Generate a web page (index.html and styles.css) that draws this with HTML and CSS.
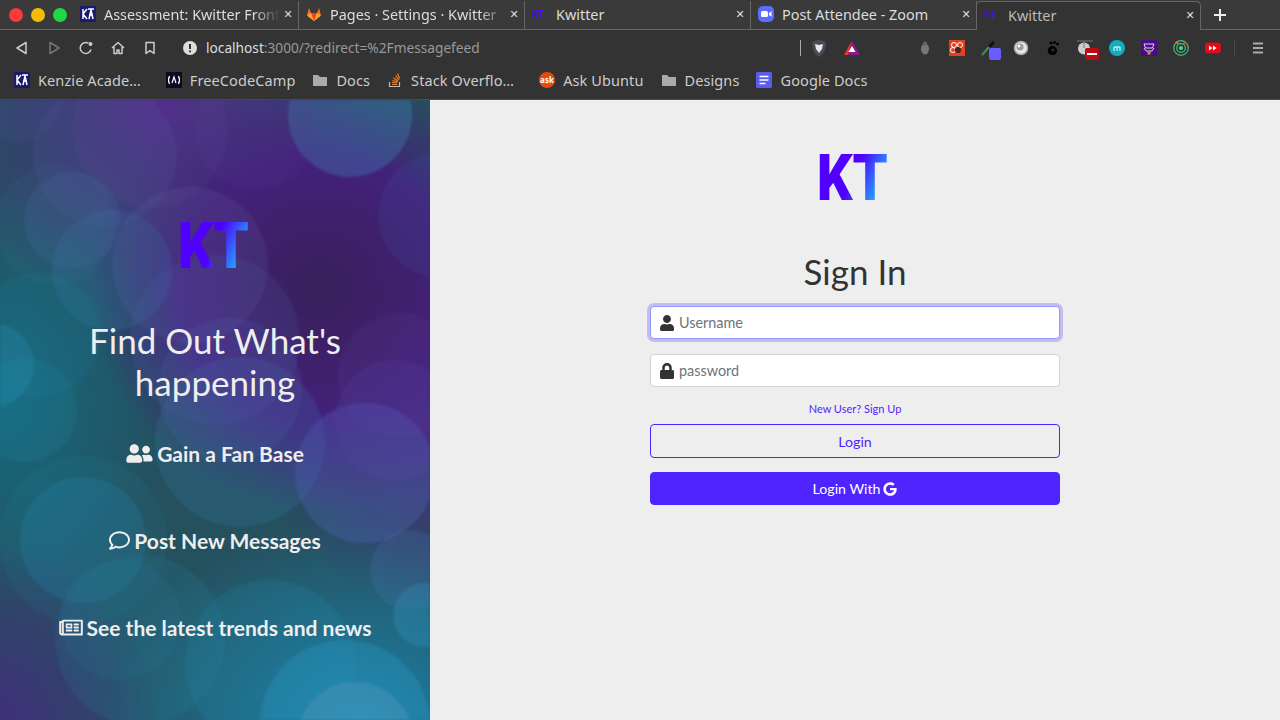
FILE: index.html
```html
<!DOCTYPE html>
<html lang="en">

<head>
    <meta charset="UTF-8">
    <meta name="viewport" content="width=device-width, initial-scale=1.0">
    <title>Kwitter</title>
    <link rel="stylesheet" href="styles.css">
</head>

<body>
    <header class="browser">
        <div class="tabstrip">
            <div class="lights">
                <span class="light red"></span>
                <span class="light yellow"></span>
                <span class="light green"></span>
            </div>
            <div class="tab">
                <svg class="favicon" viewBox="0 0 16 16"><rect width="16" height="16" fill="#1a1a6e"/><path d="M3 3v10M3 8l4-5M3 8l4 5M9 13l2-9 2 9M8 3h6M9 9h4" stroke="#fff" stroke-width="1.5" fill="none"/></svg>
                <span class="tab-title fade">Assessment: Kwitter Front</span>
                <span class="tab-close">✕</span>
            </div>
            <div class="tab">
                <svg class="favicon" viewBox="0 0 16 16"><path d="M8 15L1 9.500 3 2l2 5h6l2-5 2 7.500z" fill="#fc6d26"/><path d="M8 15L5 7h6z" fill="#e24329"/><path d="M1 9.500L5 7l3 8zM15 9.500L11 7l-3 8z" fill="#fca326"/></svg>
                <span class="tab-title fade">Pages · Settings · Kwitter</span>
                <span class="tab-close">✕</span>
            </div>
            <div class="tab">
                <span class="favicon mini-kt">KT</span>
                <span class="tab-title">Kwitter</span>
                <span class="tab-close">✕</span>
            </div>
            <div class="tab">
                <svg class="favicon" viewBox="0 0 16 16"><rect width="16" height="16" rx="5" fill="#5c6cff"/><rect x="3" y="5" width="7" height="6" rx="1.500" fill="#fff"/><path d="M11 7l2.500-1.800v5.600L11 9z" fill="#fff"/></svg>
                <span class="tab-title">Post Attendee - Zoom</span>
                <span class="tab-close">✕</span>
            </div>
            <div class="tab active">
                <span class="favicon mini-kt">KT</span>
                <span class="tab-title">Kwitter</span>
                <span class="tab-close">✕</span>
            </div>
            <svg class="new-tab" viewBox="0 0 12 12"><path d="M6 0v12M0 6h12" stroke="#eee" stroke-width="2"/></svg>
        </div>

        <div class="toolbar">
            <div class="nav-buttons">
                <svg viewBox="0 0 16 16"><path d="M12 2.500v11L3 8z" fill="none" stroke="#ccc" stroke-width="1.500" stroke-linejoin="round"/></svg>
                <svg viewBox="0 0 16 16"><path d="M4 2.500v11L13 8z" fill="none" stroke="#777" stroke-width="1.500" stroke-linejoin="round"/></svg>
                <svg viewBox="0 0 16 16"><path d="M13 9.500A5.500 5.500 0 1 1 10.500 3.200" fill="none" stroke="#ccc" stroke-width="1.500"/><circle cx="12.500" cy="4" r="2" fill="#ccc"/></svg>
                <svg viewBox="0 0 16 16"><path d="M2 8l6-5.500L14 8M4 7v6.500h3v-3.500h2v3.500h3V7" fill="none" stroke="#ccc" stroke-width="1.500" stroke-linejoin="round"/></svg>
                <svg viewBox="0 0 16 16"><path d="M4 2.500h8v11l-4-2.800-4 2.800z" fill="none" stroke="#ccc" stroke-width="1.500" stroke-linejoin="round"/></svg>
            </div>
            <svg class="info" viewBox="0 0 14 14"><circle cx="7" cy="7" r="7" fill="#ddd"/><path d="M7 3v5M7 9.500v1.700" stroke="#333" stroke-width="2"/></svg>
            <div class="url"><span class="url-host">localhost</span>:3000/?redirect=%2Fmessagefeed</div>
            <span class="tool-sep"></span>
            <div class="extensions">
                <svg class="ext brave" viewBox="0 0 16 18"><path d="M3 2l5-1.500L13 2l2 2-1 7-2 4-4 3-4-3-2-4-1-7z" fill="#4a4a58"/><path d="M4 5l4 1 4-1-1 5-3 4-3-4z" fill="#e8e8e8"/></svg>
                <svg class="ext triangle" viewBox="0 0 16 16"><path d="M8 1l8 14H0z" fill="#8a1a8a"/><path d="M8 1L0 15h4z" fill="#e83a20"/><path d="M8 6l3.500 6h-7z" fill="#fff"/></svg>
                <svg class="ext bug" viewBox="0 0 16 16"><ellipse cx="8" cy="9" rx="4" ry="5.500" fill="#777"/><circle cx="8" cy="3.500" r="2" fill="#666"/></svg>
                <svg class="ext" viewBox="0 0 16 16"><rect width="16" height="16" fill="#e0401f"/><circle cx="5" cy="5" r="2.500" fill="none" stroke="#fff"/><circle cx="11" cy="5" r="2.500" fill="none" stroke="#fff"/><circle cx="4" cy="10" r="2.500" fill="none" stroke="#fff"/><circle cx="9" cy="10" r="3" fill="#422"/></svg>
                <span class="ext-badged">
                    <svg class="ext" viewBox="0 0 16 16"><path d="M1 15l8-9" stroke="#3f8f5f" stroke-width="2"/><path d="M8 7l5-5" stroke="#111" stroke-width="3"/></svg>
                    <span class="badge-square"></span>
                </span>
                <svg class="ext" viewBox="0 0 16 16"><circle cx="8" cy="8" r="6.500" fill="#e8e8e8" stroke="#aaa" stroke-width="1.500"/><circle cx="7" cy="7" r="3.500" fill="#999"/><circle cx="6" cy="6" r="1.500" fill="#fff"/></svg>
                <svg class="ext" viewBox="0 0 16 16"><path d="M8 15c-4 0-6-3-5-6 1-2 3-3 4-3 2 0 5 1 5 5 0 2-2 4-4 4z" fill="#000"/><circle cx="6" cy="3" r="1.500" fill="#000"/><circle cx="9.500" cy="2.500" r="1.500" fill="#000"/><circle cx="12.500" cy="4" r="1.500" fill="#000"/><circle cx="8" cy="10" r="1.500" fill="#333"/></svg>
                <span class="ext-badged">
                    <svg class="ext" viewBox="0 0 16 16"><path d="M0 1h16" stroke="#777"/><circle cx="7" cy="8.500" r="6" fill="#ccc"/><path d="M7 1v7" stroke="#777"/></svg>
                    <span class="badge-minus"></span>
                </span>
                <svg class="ext" viewBox="0 0 16 16"><circle cx="8" cy="8" r="8" fill="#10aec0"/><path d="M5 11V7M8 11V7M11 11V7M5 7h6" stroke="#fff" fill="none"/></svg>
                <svg class="ext" viewBox="0 0 16 16"><rect width="16" height="16" fill="#4b0a8c"/><path d="M3 4h10l-1.500 4h-7zM3 8l2 3h6l2-3" fill="none" stroke="#ddd"/><rect x="6.500" y="11.500" width="3" height="3" fill="#c99a30"/></svg>
                <svg class="ext" viewBox="0 0 16 16"><circle cx="8" cy="8" r="7.300" fill="none" stroke="#3fbf80" stroke-width="1.200"/><circle cx="8" cy="8" r="4.300" fill="none" stroke="#3fbf80" stroke-width="1.200"/><circle cx="8" cy="8" r="2" fill="#3fdf90"/><circle cx="4" cy="2.500" r="1.500" fill="#e07020"/><circle cx="11" cy="3.500" r="1.200" fill="#e04020"/></svg>
                <svg class="ext" viewBox="0 0 16 16"><rect y="2.500" width="16" height="11" rx="3.500" fill="#e30b17"/><path d="M4 5.500l3.500 2.500L4 10.500zM8 5.500l3.500 2.500L8 10.500z" fill="#fff"/></svg>
            </div>
            <span class="tool-sep faint"></span>
            <svg class="menu" viewBox="0 0 10 12"><path d="M0 1.500h10M0 6h10M0 10.500h10" stroke="#aaa" stroke-width="2"/></svg>
        </div>

        <div class="bookmarks">
            <a class="bookmark clipped">
                <svg class="favicon" viewBox="0 0 16 16"><rect width="16" height="16" fill="#1a1a6e"/><path d="M3 3v10M3 8l4-5M3 8l4 5M9 13l2-9 2 9M8 3h6M9 9h4" stroke="#fff" stroke-width="1.500" fill="none"/></svg>
                Kenzie Acade…
            </a>
            <a class="bookmark">
                <svg class="favicon" viewBox="0 0 16 16"><rect width="16" height="16" fill="#0a0a23"/><path d="M3.500 4Q1.500 8 3.500 12M12.500 4q2 4 0 8M6 11l2-6 2 6" fill="none" stroke="#fff" stroke-width="1.200"/></svg>
                FreeCodeCamp
            </a>
            <a class="bookmark">
                <svg class="favicon" viewBox="0 0 16 16"><path d="M1 3h5l2 2h7v9H1z" fill="#aaa"/></svg>
                Docs
            </a>
            <a class="bookmark clipped">
                <svg class="favicon" viewBox="0 0 16 16"><path d="M2.500 10v4.500h10V10" fill="none" stroke="#bbb" stroke-width="1.200"/><path d="M5 12.500h5M5 10.500l5 .5M5.500 8.500l5 1.500M6.500 6l4.500 3M8.500 3.500l3.500 4.500M10.500 1.500l2 5" stroke="#f48024" stroke-width="1.200"/></svg>
                Stack Overflo…
            </a>
            <a class="bookmark">
                <span class="favicon ask">ask</span>
                Ask Ubuntu
            </a>
            <a class="bookmark">
                <svg class="favicon" viewBox="0 0 16 16"><path d="M1 3h5l2 2h7v9H1z" fill="#aaa"/></svg>
                Designs
            </a>
            <a class="bookmark">
                <svg class="favicon" viewBox="0 0 16 16"><rect width="16" height="16" rx="1.500" fill="#5a5cf0"/><path d="M3.500 4.500h9M3.500 8h9M3.500 11.500h6" stroke="#fff" stroke-width="1.600"/></svg>
                Google Docs
            </a>
        </div>
    </header>

    <main class="page">
        <section class="promo">
            <svg class="bokeh" viewBox="0 0 430 620" preserveAspectRatio="none">
                <g fill="#5a8fd0" fill-opacity=".14">
                    <circle cx="150" cy="30" r="78" fill="#8a60b0"/>
                    <circle cx="105" cy="55" r="72"/>
                    <circle cx="350" cy="15" r="62" fill="#3fa0c8" fill-opacity=".5"/>
                    <circle cx="255" cy="30" r="60" fill="#6a50b0"/>
                    <circle cx="20" cy="0" r="42" fill="#5a70c0"/>
                    <circle cx="440" cy="115" r="62" fill="#3a80c0" fill-opacity=".18"/>
                    <circle cx="72" cy="120" r="48" fill-opacity=".2"/>
                    <circle cx="55" cy="125" r="60" fill-opacity=".1"/>
                    <circle cx="190" cy="165" r="78" fill="#7a90c8" fill-opacity=".2"/>
                    <circle cx="112" cy="170" r="60" fill="#3a9ad0" fill-opacity=".24"/>
                    <circle cx="215" cy="240" r="85" fill-opacity=".18"/>
                    <circle cx="400" cy="275" r="62" fill="#7a60c0" fill-opacity=".14"/>
                    <circle cx="-8" cy="265" r="42" fill="#3fb0e0" fill-opacity=".3"/>
                    <circle cx="38" cy="235" r="62" fill="#20a0d0" fill-opacity=".14"/>
                    <circle cx="240" cy="342" r="85" fill="#3a90c8" fill-opacity=".3"/>
                    <circle cx="230" cy="290" r="72" fill="#6090d0" fill-opacity=".2"/>
                    <circle cx="365" cy="373" r="70" fill="#5a80e0" fill-opacity=".4"/>
                    <circle cx="395" cy="320" r="60" fill="#6a70d0" fill-opacity=".18"/>
                    <circle cx="83" cy="440" r="63" fill="#20a0e0" fill-opacity=".3"/>
                    <circle cx="83" cy="440" r="84" fill="#20a0c0" fill-opacity=".14"/>
                    <circle cx="25" cy="310" r="52" fill="#30b0d0" fill-opacity=".16"/>
                    <circle cx="140" cy="540" r="85" fill="#20a0c0" fill-opacity=".22"/>
                    <circle cx="270" cy="565" r="85" fill="#20a0c0" fill-opacity=".26"/>
                    <circle cx="120" cy="520" r="60" fill="#20a0d0" fill-opacity=".14"/>
                    <circle cx="345" cy="625" r="85" fill="#30b0e0" fill-opacity=".4"/>
                    <circle cx="355" cy="640" r="58" fill="#a0c0e0" fill-opacity=".28"/>
                    <circle cx="425" cy="515" r="32" fill="#30b0e0" fill-opacity=".4"/>
                    <circle cx="410" cy="470" r="40" fill="#6090e0" fill-opacity=".25"/>
                </g>
            </svg>
            <div class="promo-body">
                <div class="logo-wrap promo-logo"><span class="logo">KT</span></div>
                <h2 class="promo-title">Find Out What's happening</h2>
                <h4 class="feature">
                    <svg class="feature-icon wide" viewBox="0 0 640 512"><path d="M192 256c61.900 0 112-50.100 112-112S253.900 32 192 32 80 82.100 80 144s50.100 112 112 112zm76.800 32h-8.300c-20.800 10-43.900 16-68.500 16s-47.600-6-68.500-16h-8.300C51.600 288 0 339.600 0 403.200V432c0 26.500 21.500 48 48 48h288c26.500 0 48-21.500 48-48v-28.800c0-63.600-51.600-115.200-115.200-115.200zM480 256c53 0 96-43 96-96s-43-96-96-96-96 43-96 96 43 96 96 96zm48 32h-3.800c-13.900 4.800-28.600 8-44.200 8s-30.300-3.200-44.200-8H432c-20.400 0-39.200 5.900-55.700 15.400 24.400 26.300 39.700 61.200 39.700 99.800v38.400c0 2.200-.5 4.300-.6 6.400H592c26.500 0 48-21.500 48-48 0-61.900-50.100-112-112-112z"/></svg>
                    Gain a Fan Base
                </h4>
                <h4 class="feature">
                    <svg class="feature-icon" viewBox="0 0 512 512"><path d="M256 32C114.600 32 0 125.100 0 240c0 47.600 19.900 91.200 52.900 126.300C38 405.700 7 439.100 6.500 439.500c-6.600 7-8.400 17.200-4.600 26S14.400 480 24 480c61.500 0 110-25.700 139.100-46.300C192 442.800 223.200 448 256 448c141.400 0 256-93.100 256-208S397.400 32 256 32zm0 368c-26.700 0-53.100-4.100-78.400-12.100l-22.700-7.200-19.500 13.800c-14.300 10.100-33.900 21.400-57.500 29 7.300-12.100 14.400-25.700 19.900-40.200l10.600-28.100-20.600-21.800C69.700 314.100 48 282.200 48 240c0-88.200 93.300-160 208-160s208 71.800 208 160-93.300 160-208 160z"/></svg>
                    Post New Messages
                </h4>
                <h4 class="feature">
                    <svg class="feature-icon news" viewBox="0 0 576 512"><path d="M552 64H112c-20.858 0-38.643 13.377-45.248 32H24c-13.255 0-24 10.745-24 24v272c0 30.928 25.072 56 56 56h496c13.255 0 24-10.745 24-24V88c0-13.255-10.745-24-24-24zM48 392V144h16v248c0 4.411-3.589 8-8 8s-8-3.589-8-8zm480 8H111.422c.374-2.614.578-5.283.578-8V112h416v288zM172 280h136c6.627 0 12-5.373 12-12v-96c0-6.627-5.373-12-12-12H172c-6.627 0-12 5.373-12 12v96c0 6.627 5.373 12 12 12zm28-80h80v40h-80v-40zm-40 140v-24c0-6.627 5.373-12 12-12h136c6.627 0 12 5.373 12 12v24c0 6.627-5.373 12-12 12H172c-6.627 0-12-5.373-12-12zm192 0v-24c0-6.627 5.373-12 12-12h104c6.627 0 12 5.373 12 12v24c0 6.627-5.373 12-12 12H364c-6.627 0-12-5.373-12-12zm0-144v-24c0-6.627 5.373-12 12-12h104c6.627 0 12 5.373 12 12v24c0 6.627-5.373 12-12 12H364c-6.627 0-12-5.373-12-12zm0 72v-24c0-6.627 5.373-12 12-12h104c6.627 0 12 5.373 12 12v24c0 6.627-5.373 12-12 12H364c-6.627 0-12-5.373-12-12z"/></svg>
                    See the latest trends and news
                </h4>
            </div>
        </section>

        <section class="signin">
            <div class="logo-wrap signin-logo"><span class="logo">KT</span></div>
            <h2 class="signin-title">Sign In</h2>
            <form class="signin-form">
                <div class="field focused">
                    <svg class="field-icon" viewBox="0 0 448 512"><path d="M224 256c70.700 0 128-57.300 128-128S294.700 0 224 0 96 57.300 96 128s57.300 128 128 128zm89.600 32h-16.700c-22.200 10.200-46.900 16-72.900 16s-50.600-5.800-72.900-16h-16.700C60.200 288 0 348.200 0 422.400V464c0 26.500 21.500 48 48 48h352c26.500 0 48-21.500 48-48v-41.600c0-74.200-60.200-134.400-134.400-134.400z"/></svg>
                    <input class="field-input" type="text" placeholder="Username">
                </div>
                <div class="field">
                    <svg class="field-icon" viewBox="0 0 448 512"><path d="M400 224h-24v-72C376 68.200 307.800 0 224 0S72 68.200 72 152v72H48c-26.500 0-48 21.500-48 48v192c0 26.500 21.500 48 48 48h352c26.500 0 48-21.500 48-48V272c0-26.500-21.500-48-48-48zm-104 0H152v-72c0-39.700 32.300-72 72-72s72 32.300 72 72v72z"/></svg>
                    <input class="field-input" type="password" placeholder="password">
                </div>
                <a class="signup-link">New User? Sign Up</a>
                <button class="btn btn-outline" type="button">Login</button>
                <button class="btn btn-solid" type="button">
                    Login With
                    <svg class="g-icon" viewBox="0 0 488 512"><path d="M488 261.800C488 403.300 391.100 504 248 504 110.800 504 0 393.200 0 256S110.800 8 248 8c66.800 0 123 24.500 166.300 64.900l-67.500 64.900C258.500 52.600 94.300 116.600 94.300 256c0 86.500 69.100 156.600 153.700 156.600 98.200 0 135-70.400 140.800-106.900H248v-85.300h236.100c2.300 12.700 3.900 24.900 3.900 41.400z"/></svg>
                </button>
            </form>
        </section>
    </main>
</body>

</html>
```
FILE: styles.css
```css
* {
    box-sizing: border-box;
}
html, body {
    height: 100%;
}
body {
    margin: 0;
    overflow: hidden;
    font-family: Lato, Arial, sans-serif;
    background-color: #eeeeee;
}

/* browser frame */
.browser {
    height: 100px;
    background-color: #333333;
    color: #dddddd;
    font-family: "Noto Sans", Arial, sans-serif;
    border-bottom: 1px solid #4a4a4a;
}
.tabstrip {
    display: flex;
    align-items: stretch;
    height: 30px;
    padding-top: 1px;
    background-color: #3a3a3a;
    border-bottom: 1px solid #666666;
}
.lights {
    display: flex;
    align-items: center;
    gap: 8px;
    width: 73px;
    padding: 0 0 1px 9px;
}
.light {
    width: 14px;
    height: 14px;
    border-radius: 50%;
}
.light.red { background-color: #f53b3b; }
.light.yellow { background-color: #f3bd07; }
.light.green { background-color: #22d745; }
.tab {
    display: flex;
    align-items: center;
    width: 226px;
    padding: 0 2px 2px 7px;
    border-right: 1px solid #666666;
    font-size: 14.4px;
    white-space: nowrap;
}
.tab.active {
    background-color: #333333;
    width: 225px;
    border: 1px solid #666666;
    border-bottom: none;
    border-radius: 5px 5px 0 0;
    margin-left: -1px;
    margin-bottom: -1px;
}
.favicon {
    flex: none;
    width: 16px;
    height: 16px;
}
.mini-kt {
    font-family: Roboto, Arial, sans-serif;
    font-weight: 900;
    font-size: 9px;
    line-height: 16px;
    background: linear-gradient(110deg, #5000ff 50%, #20b0ff);
    -webkit-background-clip: text;
    background-clip: text;
    color: transparent;
}
.tab-title {
    flex: 1;
    margin-left: 8px;
    overflow: hidden;
    color: #dddddd;
}
.tab.active .tab-title {
    color: #bbbbbb;
}
.tab-title.fade {
    -webkit-mask-image: linear-gradient(to right, #000 85%, transparent);
    mask-image: linear-gradient(to right, #000 85%, transparent);
}
.tab-close {
    width: 16px;
    font-size: 11px;
    font-family: "DejaVu Sans", sans-serif;
    text-align: center;
    color: #dddddd;
}
.new-tab {
    width: 12px;
    height: 12px;
    margin: 8px 0 0 13px;
}

.toolbar {
    display: flex;
    align-items: center;
    height: 35px;
    padding-left: 14px;
}
.nav-buttons {
    display: flex;
    gap: 16px;
}
.nav-buttons svg {
    width: 16px;
    height: 16px;
}
.info {
    width: 14px;
    height: 14px;
    margin: 0 0 0 25px;
}
.url {
    width: 594px;
    margin-left: 9px;
    font-size: 13.7px;
    color: #999999;
    white-space: nowrap;
}
.url-host {
    color: #dddddd;
}
.tool-sep {
    width: 1px;
    height: 16px;
    background-color: #aaaaaa;
}
.tool-sep.faint {
    margin-left: -3px;
    background-color: #4a4a4a;
}
.extensions {
    display: flex;
    align-items: center;
    margin-left: 10px;
}
.ext {
    display: block;
    width: 16px;
    height: 16px;
    margin-right: 16px;
    flex: none;
}
.brave {
    height: 18px;
    margin-right: 17px;
}
.triangle {
    margin-right: 57px;
}
.ext-badged {
    position: relative;
    display: block;
}
.badge-square {
    position: absolute;
    left: 8px;
    top: 8px;
    width: 12px;
    height: 12px;
    border-radius: 2px;
    background-color: #6a5cff;
}
.badge-minus {
    position: absolute;
    left: 8px;
    top: 8px;
    width: 14px;
    height: 12px;
    border-radius: 2px;
    background: linear-gradient(#fff, #fff) center / 10px 2px no-repeat #bb0a14;
}
.menu {
    width: 10px;
    height: 12px;
    margin-left: 18px;
}

.bookmarks {
    display: flex;
    align-items: center;
    height: 30px;
    padding-left: 14px;
    gap: 17px;
}
.bookmark {
    display: flex;
    align-items: center;
    gap: 8px;
    font-size: 14.5px;
    letter-spacing: 0.1px;
    color: #cccccc;
    white-space: nowrap;
}
.bookmark.clipped {
    margin-right: 8px;
}
.ask {
    border-radius: 50%;
    background-color: #e8490f;
    color: #ffffff;
    font-size: 8px;
    font-weight: bold;
    line-height: 16px;
    text-align: center;
}

/* page */
.page {
    display: flex;
    height: 620px;
}
.promo {
    position: relative;
    width: 430px;
    overflow: hidden;
    background-color: #25505e;
    background-image:
        radial-gradient(230px 220px at 320px 190px, #38205a 0%, #43217a 60%, rgba(67, 33, 122, 0) 100%),
        radial-gradient(220px 200px at 160px 10px, #4d2a85 0%, rgba(77, 42, 133, 0) 100%),
        radial-gradient(200px 220px at 440px 290px, #4d2480 0%, rgba(77, 36, 128, 0) 100%),
        radial-gradient(160px 180px at 0px 620px, #40307a 0%, rgba(64, 48, 122, 0) 100%),
        radial-gradient(170px 220px at 0px 300px, #146a80 0%, rgba(20, 106, 128, 0) 100%),
        radial-gradient(260px 200px at 360px 620px, #1d7fa6 0%, rgba(29, 127, 166, 0) 100%);
}
.bokeh {
    position: absolute;
    inset: 0;
    width: 100%;
    height: 100%;
    opacity: 0.55;
    filter: blur(1px);
}
.promo-body {
    position: relative;
    display: flex;
    flex-direction: column;
    align-items: center;
    padding-top: 109px;
    color: #eeeeee;
}
.logo-wrap {
    display: flex;
    justify-content: center;
    height: 74px;
}
.promo-logo {
    padding-right: 4px;
}
.logo {
    display: block;
    font-family: Roboto, Arial, sans-serif;
    font-weight: 900;
    font-size: 65px;
    line-height: 74px;
    background: linear-gradient(118deg, #5000ff 50%, #1fb6ff 84%);
    -webkit-background-clip: text;
    background-clip: text;
    color: transparent;
    transform: scaleX(0.86);
}
.promo-title {
    width: 300px;
    margin: 36px 0 0;
    font-size: 35px;
    font-weight: 400;
    line-height: 42px;
    text-align: center;
}
.feature {
    display: flex;
    align-items: center;
    justify-content: center;
    gap: 4px;
    height: 27px;
    margin: 0 0 60px;
    font-size: 21px;
    font-weight: 700;
    line-height: 27px;
    white-space: nowrap;
}
.promo-title + .feature {
    margin-top: 37px;
}
.feature-icon {
    width: 21px;
    height: 21px;
    fill: #eeeeee;
}
.feature-icon.wide {
    width: 27px;
}
.feature-icon.news {
    width: 24px;
}

.signin {
    flex: 1;
    display: flex;
    flex-direction: column;
    align-items: center;
    padding-top: 41px;
    color: #333333;
}
.signin-logo {
    width: 100%;
    padding-right: 5px;
}
.signin-title {
    margin: 35px 0 14px;
    font-size: 35px;
    font-weight: 400;
    line-height: 42px;
}
.signin-form {
    display: flex;
    flex-direction: column;
    width: 410px;
}
.field {
    display: flex;
    align-items: center;
    height: 33px;
    margin-bottom: 15px;
    padding-left: 9px;
    background-color: #ffffff;
    border: 1px solid #ced4da;
    border-radius: 4px;
}
.field.focused {
    border-color: #8f9cff;
    box-shadow: 0 0 0 3px rgba(80, 36, 255, 0.25);
}
.field-icon {
    flex: none;
    width: 14px;
    height: 16px;
    fill: #333333;
}
.field-input {
    flex: 1;
    min-width: 0;
    margin-left: 5px;
    padding: 0;
    border: none;
    outline: none;
    background: transparent;
    font-family: Lato, Arial, sans-serif;
    font-size: 14.4px;
}
.field-input::placeholder {
    color: #6c757d;
    opacity: 1;
}
.signup-link {
    margin-bottom: 8px;
    font-size: 11px;
    line-height: 14px;
    text-align: center;
    color: #5024ff;
}
.btn {
    display: flex;
    align-items: center;
    justify-content: center;
    height: 34px;
    border-radius: 4px;
    font-family: Lato, Arial, sans-serif;
    font-size: 14.2px;
    cursor: pointer;
}
.btn-outline {
    margin-bottom: 14px;
    background: transparent;
    border: 1px solid #5024ff;
    color: #5024ff;
}
.btn-solid {
    height: 33px;
    gap: 3px;
    background-color: #5024ff;
    border: 1px solid #5024ff;
    color: #ffffff;
}
.g-icon {
    width: 14px;
    height: 14px;
    fill: #ffffff;
}
```
